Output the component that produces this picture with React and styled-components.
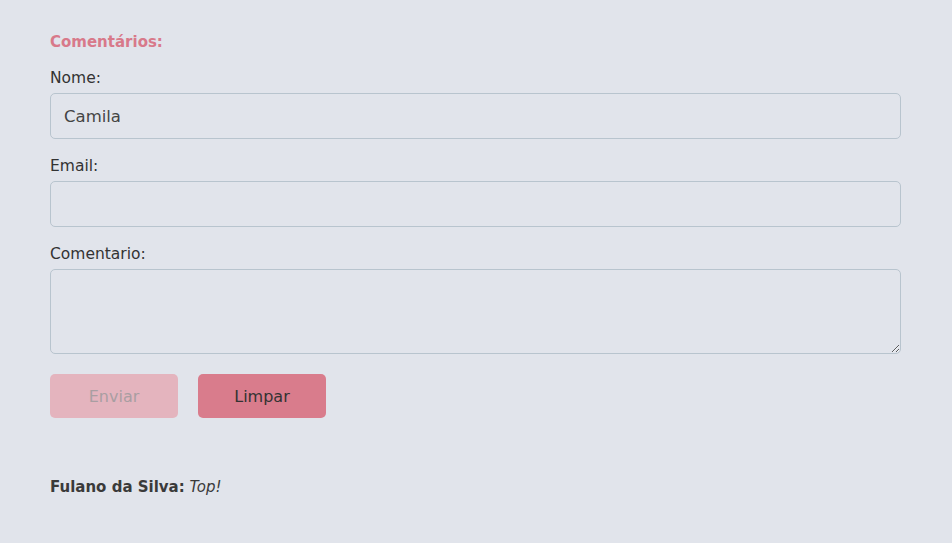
import React from "react";
import styled, { createGlobalStyle } from "styled-components";

const GlobalStyle = createGlobalStyle`
  html, body {
    margin: 0;
    padding: 0;
    background-color: #e1e4eb;
    font-family: "DejaVu Sans", "Open Sans", sans-serif;
    color: #3a3a3a;
  }
`;

const Page = styled.div`
  padding: 33px 51px 40px 50px;
  min-height: 543px;
  box-sizing: border-box;
`;

const Title = styled.h2`
  margin: 0 0 18px;
  font-size: 15px;
  line-height: 18px;
  font-weight: bold;
  color: #d8798a;
`;

const Form = styled.form`
  display: flex;
  flex-direction: column;
`;

const Label = styled.label`
  font-size: 15.5px;
  line-height: 19px;
  margin-bottom: 5px;
  color: #333;
`;

const Input = styled.input`
  height: 46px;
  box-sizing: border-box;
  border: 1px solid #b8c4ce;
  border-radius: 5px;
  background-color: #e1e4eb;
  padding: 0 13px;
  font-family: inherit;
  font-size: 16.5px;
  color: #444;
  margin-bottom: 18px;
  outline: none;
`;

const TextArea = styled.textarea`
  height: 85px;
  box-sizing: border-box;
  border: 1px solid #b8c4ce;
  border-radius: 5px;
  background-color: #e1e4eb;
  padding: 10px 13px;
  font-family: inherit;
  font-size: 16px;
  margin-bottom: 20px;
  outline: none;
  resize: vertical;
`;

const Buttons = styled.div`
  display: flex;
  gap: 20px;
`;

const Button = styled.button`
  width: 128px;
  height: 44px;
  border: none;
  border-radius: 5px;
  font-family: inherit;
  font-size: 16px;
  background-color: ${(p) => (p.disabled ? "#e4b4be" : "#d97c8c")};
  color: ${(p) => (p.disabled ? "#a99ea2" : "#333")};
  cursor: ${(p) => (p.disabled ? "default" : "pointer")};
`;

const Comment = styled.p`
  margin: 60px 0 0;
  font-size: 15px;
  line-height: 19px;
  color: #3a3a3a;
`;

const Author = styled.strong`
  font-weight: bold;
`;

const Text = styled.em`
  font-style: italic;
`;

const App = () => {
  return (
    <Page>
      <GlobalStyle />
      <Title>Comentários:</Title>
      <Form onSubmit={(e) => e.preventDefault()}>
        <Label>Nome:</Label>
        <Input defaultValue="Camila" />
        <Label>Email:</Label>
        <Input />
        <Label>Comentario:</Label>
        <TextArea />
        <Buttons>
          <Button disabled>Enviar</Button>
          <Button type="button">Limpar</Button>
        </Buttons>
      </Form>
      <Comment>
        <Author>Fulano da Silva:</Author> <Text>Top!</Text>
      </Comment>
    </Page>
  );
};

export default App;
